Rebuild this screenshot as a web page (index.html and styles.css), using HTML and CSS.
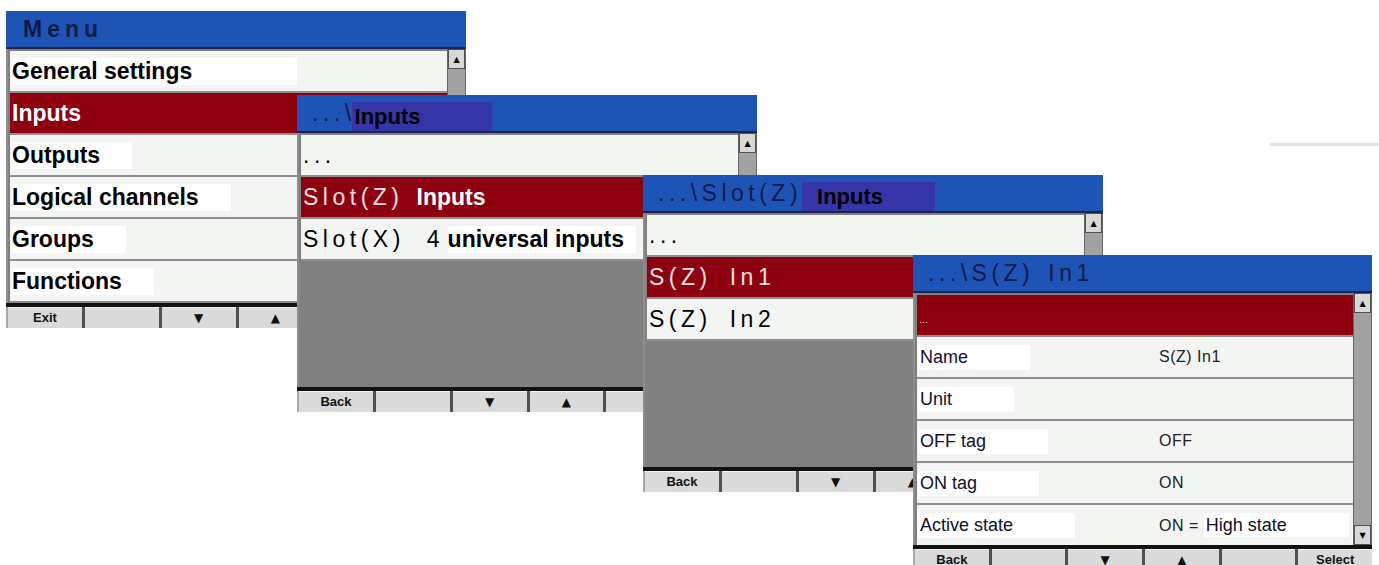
FILE: index.html
```html
<!DOCTYPE html>
<html lang="en">
<head>
  <meta charset="UTF-8">
  <meta name="viewport" content="width=device-width, initial-scale=1.0">
  <title>Inputs menu</title>
  <link rel="stylesheet" href="styles.css">
</head>
<body>
  <div class="desk">

    <!-- Main menu -->
    <section class="win win-menu">
      <header class="title"><span class="menu-name">Menu</span></header>
      <div class="pane">
        <ul class="list">
          <li class="row"><span class="lbl lbl-wide">General settings</span></li>
          <li class="row sel"><span class="lbl">Inputs</span></li>
          <li class="row"><span class="lbl">Outputs</span></li>
          <li class="row"><span class="lbl">Logical channels</span></li>
          <li class="row"><span class="lbl">Groups</span></li>
          <li class="row"><span class="lbl">Functions</span></li>
        </ul>
        <div class="scroll">
          <span class="sb-btn">&#9650;</span>
        </div>
      </div>
      <div class="bar"></div>
      <div class="keys">
        <span class="key">Exit</span>
        <span class="key"></span>
        <span class="key arrow">&#9660;</span>
        <span class="key arrow">&#9650;</span>
        <span class="key"></span>
        <span class="key">Select</span>
      </div>
    </section>

    <!-- ...\Inputs -->
    <section class="win win-inputs">
      <header class="title">
        <span class="sp">...\</span><span class="hl hl-inputs">Inputs</span>
      </header>
      <div class="pane">
        <ul class="list">
          <li class="row"><span class="sp">...</span></li>
          <li class="row sel"><span class="sp">Slot(Z)</span><span class="after-slot">Inputs</span></li>
          <li class="row"><span class="sp">Slot(X)</span><span class="num">4</span><span class="lbl after-num">universal inputs</span></li>
        </ul>
        <div class="scroll">
          <span class="sb-btn">&#9650;</span>
        </div>
      </div>
      <div class="bar"></div>
      <div class="keys">
        <span class="key">Back</span>
        <span class="key"></span>
        <span class="key arrow">&#9660;</span>
        <span class="key arrow">&#9650;</span>
        <span class="key"></span>
        <span class="key">Select</span>
      </div>
    </section>

    <!-- ...\Slot(Z) Inputs -->
    <section class="win win-slot">
      <header class="title">
        <span class="sp">...\Slot(Z)</span><span class="hl hl-slot">Inputs</span>
      </header>
      <div class="pane">
        <ul class="list">
          <li class="row"><span class="sp">...</span></li>
          <li class="row sel"><span class="sp">S(Z)</span><span class="sp gap">In1</span></li>
          <li class="row"><span class="sp">S(Z)</span><span class="sp gap">In2</span></li>
        </ul>
        <div class="scroll">
          <span class="sb-btn">&#9650;</span>
        </div>
      </div>
      <div class="bar"></div>
      <div class="keys">
        <span class="key">Back</span>
        <span class="key"></span>
        <span class="key arrow">&#9660;</span>
        <span class="key arrow">&#9650;</span>
        <span class="key"></span>
        <span class="key">Select</span>
      </div>
    </section>

    <!-- ...\S(Z) In1 -->
    <section class="win win-chan">
      <header class="title">
        <span class="sp">...\S(Z)</span><span class="sp gap-title">In1</span>
      </header>
      <div class="pane">
        <ul class="list">
          <li class="row sel"><span class="dots">...</span></li>
          <li class="row prop"><span class="lbl">Name</span><span class="val">S(Z) In1</span></li>
          <li class="row prop"><span class="lbl">Unit</span><span class="val"></span></li>
          <li class="row prop"><span class="lbl">OFF tag</span><span class="val">OFF</span></li>
          <li class="row prop"><span class="lbl">ON tag</span><span class="val">ON</span></li>
          <li class="row prop"><span class="lbl">Active state</span><span class="val">ON = <span class="lbl lbl-val">High state</span></span></li>
        </ul>
        <div class="scroll">
          <span class="sb-btn">&#9650;</span>
          <span class="sb-btn">&#9660;</span>
        </div>
      </div>
      <div class="bar"></div>
      <div class="keys">
        <span class="key">Back</span>
        <span class="key"></span>
        <span class="key arrow">&#9660;</span>
        <span class="key arrow">&#9650;</span>
        <span class="key"></span>
        <span class="key">Select</span>
      </div>
    </section>

    <div class="edge"></div>
  </div>
</body>
</html>
```

FILE: styles.css
```css
* {
  box-sizing: border-box;
}

html, body {
  margin: 0;
  padding: 0;
  height: 100%;
  overflow: hidden;
  background-color: #fff;
}

body {
  font-family: "Liberation Sans", Arial, sans-serif;
  color: #000;
}

.desk {
  position: relative;
  width: 1379px;
  height: 565px;
}

/* the four cascaded screens */
.win {
  position: absolute;
  width: 460px;
  display: flex;
  flex-direction: column;
}

.win-menu { left: 6px; top: 11px; z-index: 1; }
.win-inputs { left: 297px; top: 95px; z-index: 2; }
.win-slot { left: 643px; top: 175px; z-index: 3; }
.win-chan { left: 913px; top: 255px; z-index: 4; width: 459px; }

.title {
  height: 38px;
  display: flex;
  align-items: center;
  padding-left: 15px;
  background-color: #1e54b6;
  border-bottom: 2px solid #1b2548;
  color: #0c1a48;
  font-size: 23px;
  white-space: nowrap;
}

.menu-name {
  padding-left: 2px;
  font-size: 23px;
  font-weight: bold;
  letter-spacing: 5px;
}

.hl {
  align-self: flex-end;
  height: 29px;
  line-height: 29px;
  background-color: #3535a8;
  color: #000;
  font-size: 22px;
  font-weight: bold;
}

.hl-inputs {
  margin-left: -4px;
  padding: 0 71px 0 3px;
}

.hl-slot {
  padding: 0 52px 0 15px;
}

.gap-title {
  margin-left: 14px;
}

/* list area */
.pane {
  height: 254px;
  display: flex;
  border-left: 2px solid #8e8e8e;
}

.win-chan .pane {
  height: 252px;
}

.list {
  flex: 1;
  margin: 0;
  padding: 2px 0 0 2px;
  list-style: none;
  background-color: #808080;
  overflow: hidden;
}

.row {
  height: 42px;
  display: flex;
  align-items: center;
  padding-left: 2px;
  border-bottom: 2px solid #8e8e8e;
  background-color: #f3f5f3;
  font-size: 23px;
  font-weight: bold;
  white-space: nowrap;
}

.row .lbl {
  background-color: #fff;
  padding-right: 32px;
}

.row .lbl-wide {
  padding-right: 105px;
}

.row.sel {
  background-color: #8c0010;
  color: #f6e0e0;
}

.row.sel .lbl {
  background-color: transparent;
  color: #fff;
}

.sp {
  font-weight: normal;
  letter-spacing: 4.5px;
}

.gap {
  margin-left: 18px;
}

.after-slot {
  margin-left: 13px;
  color: #fff;
}

.num {
  margin-left: 22px;
  font-weight: normal;
}

.row .after-num {
  margin-left: 8px;
  padding-right: 12px;
}

.dots {
  padding-top: 8px;
  font-size: 11px;
  font-weight: normal;
  color: #e8c8c8;
}

/* property rows */
.row.prop {
  display: grid;
  grid-template-columns: 241px auto;
  justify-items: start;
  padding-left: 1px;
  font-size: 18px;
  font-weight: normal;
  color: #101028;
}

.row.prop .lbl {
  padding: 2px 62px 2px 2px;
}

.val {
  font-size: 16px;
  letter-spacing: 0.5px;
  color: #222;
}

.row .lbl-val {
  padding: 2px 28px 2px 0;
  font-size: 18px;
  letter-spacing: 0;
  color: #101028;
}

.scroll {
  width: 19px;
  display: flex;
  flex-direction: column;
  justify-content: space-between;
  background-color: #a2a2a2;
  border-left: 1px solid #666;
  border-right: 1px solid #666;
}

.sb-btn {
  height: 20px;
  display: flex;
  align-items: center;
  justify-content: center;
  background-color: #d8d8d8;
  border: 1px solid #505050;
  font-family: "DejaVu Sans", sans-serif;
  font-size: 8px;
}

/* soft keys */
.bar {
  height: 4px;
  background-color: #121212;
}

.keys {
  display: grid;
  grid-template-columns: repeat(6, 1fr);
  gap: 3px;
  height: 21px;
  border-left: 2px solid #a8a8a8;
  background-color: #505050;
}

.key {
  background-color: #dadada;
  border-top: 1px solid #f2f2f2;
  text-align: center;
  font-size: 13px;
  font-weight: bold;
  line-height: 20px;
  color: #111;
}

.key.arrow {
  font-family: "DejaVu Sans", sans-serif;
  font-size: 12px;
}

.edge {
  position: absolute;
  left: 1270px;
  top: 143px;
  width: 109px;
  height: 3px;
  background-color: #e2e2e2;
}
```
